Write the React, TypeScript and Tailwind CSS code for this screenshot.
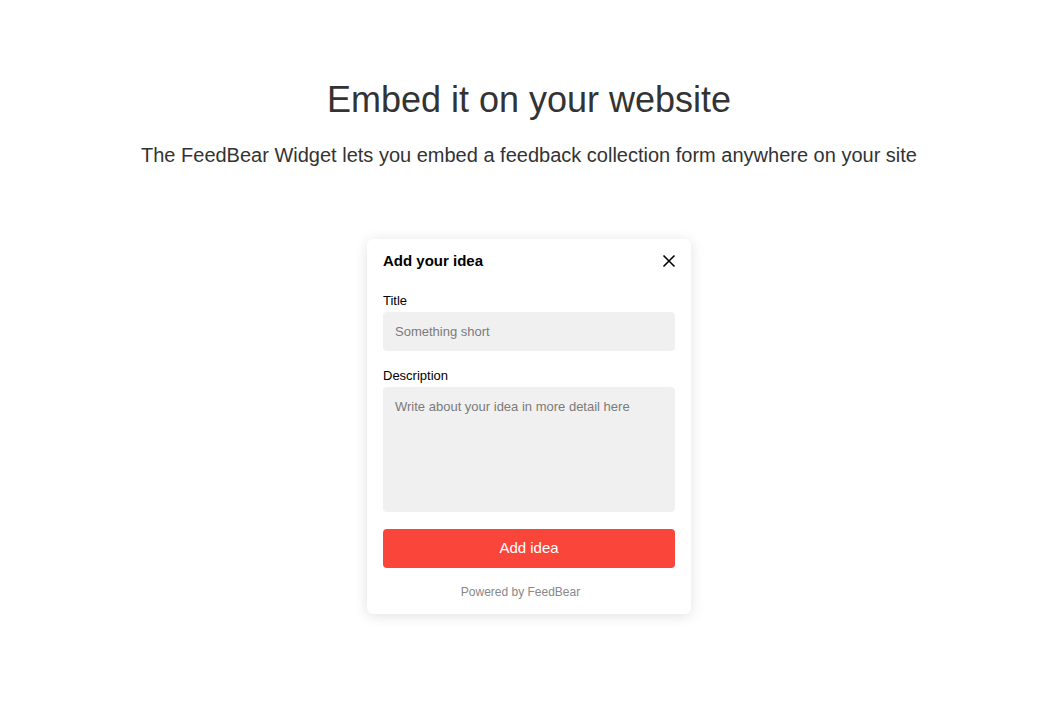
import React from 'react';

export default function App() {
  return (
    <div
      className="min-h-screen bg-white flex flex-col items-center pt-[78px] pl-[8px] text-[#333]"
      style={{ fontFamily: '"Liberation Sans", Arial, sans-serif' }}
    >
      <h1 className="text-[36px] leading-[44px]">Embed it on your website</h1>
      <p className="mt-[20px] text-[20px] leading-[26px]">
        The FeedBear Widget lets you embed a feedback collection form anywhere on your site
      </p>

      {/* Widget card */}
      <div className="mt-[71px] w-[324px] bg-white rounded-[6px] shadow-[0_2px_14px_rgba(0,0,0,0.12)] px-4 pt-[12px] pb-[15px]">
        <div className="flex items-center justify-between">
          <h2 className="text-[15px] font-bold text-black leading-[20px]">Add your idea</h2>
          <button className="text-black mr-[-1px]" aria-label="Close">
            <svg width="14" height="14" viewBox="0 0 14 14" fill="none" stroke="currentColor" strokeWidth="1.6">
              <path d="M1.5 1.5L12.5 12.5M12.5 1.5L1.5 12.5" />
            </svg>
          </button>
        </div>

        <label className="block mt-[22px] text-[13px] text-black leading-[16px]">Title</label>
        <div className="mt-[3px] h-[39px] rounded-[4px] bg-[#f0f0f0] px-3 flex items-center text-[13px] text-[#7b7b7b]">
          Something short
        </div>

        <label className="block mt-[17px] text-[13px] text-black leading-[16px]">Description</label>
        <div className="mt-[3px] h-[125px] rounded-[4px] bg-[#f0f0f0] px-3 pt-[12px] text-[13px] text-[#7b7b7b] leading-[16px]">
          Write about your idea in more detail here
        </div>

        <button className="mt-[17px] w-full h-[39px] rounded-[4px] bg-[#f9453a] text-white text-[15px]">
          Add idea
        </button>

        <div className="mt-[17px] text-center text-[12px] text-[#888] leading-[14px] pr-[17px]">
          Powered by FeedBear
        </div>
      </div>
    </div>
  );
}
